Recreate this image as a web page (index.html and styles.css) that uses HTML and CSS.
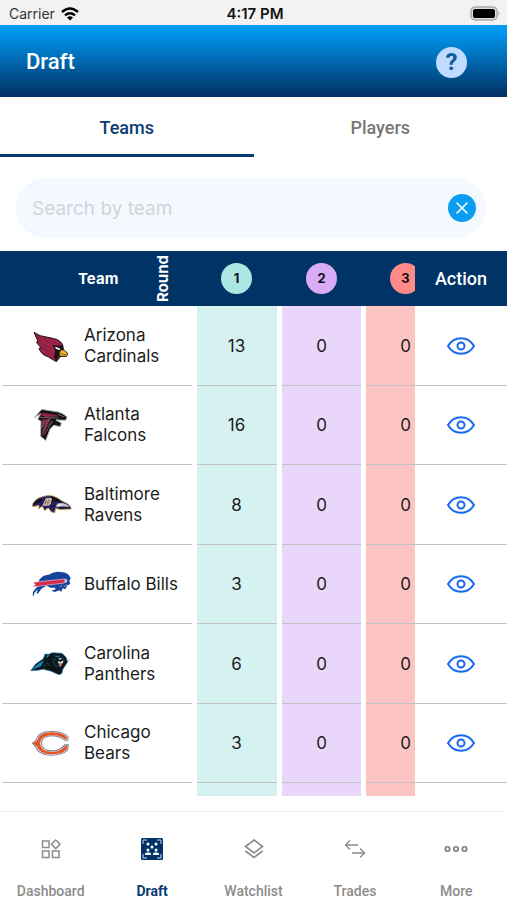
FILE: index.html
```html
<!DOCTYPE html>
<html lang="en">
<head>
<meta charset="utf-8">
<meta name="viewport" content="width=device-width, initial-scale=1">
<title>Draft</title>
<link rel="stylesheet" href="styles.css">
</head>
<body>
<svg class="defs" aria-hidden="true">
  <symbol id="eye" viewBox="0 0 30 20">
    <path d="M2 10C5 5 9.500 2.200 15 2.200S25 5 28 10C25 15 20.500 17.800 15 17.800S5 15 2 10Z"/>
    <circle cx="15" cy="10" r="3.500"/>
  </symbol>
</svg>
<div class="app">
  <div class="status">
    <span class="carrier">Carrier
      <svg width="18" height="14" viewBox="0 0 18 14" aria-hidden="true"><g fill="none" stroke="#000" stroke-width="2.400"><path d="M1 5Q9-2 17 5"/><path d="M4 8.300Q9 4 14 8.300"/></g><path d="M6 10.500Q9 8 12 10.500L9 13.600Z"/></svg>
    </span>
    <span class="time">4:17 PM</span>
    <svg class="battery" width="31" height="16" viewBox="0 0 31 16" aria-hidden="true"><rect x="1" y="1" width="26" height="13" rx="4" fill="#ddd" stroke="#aaa" stroke-width="1.500"/><rect x="3" y="3" width="22" height="9" rx="2"/><path d="M28.500 5Q31 7.500 28.500 10Z" fill="#aaa"/></svg>
  </div>
  <header class="header">
    <h1>Draft</h1>
    <button class="help" type="button" aria-label="Help">?</button>
  </header>
  <nav class="tabs">
    <a class="tab active" href="#teams">Teams</a>
    <a class="tab" href="#players">Players</a>
  </nav>
  <form class="search">
    <input type="text" placeholder="Search by team" aria-label="Search by team">
    <button type="reset" aria-label="Clear"><svg width="28" height="28" viewBox="0 0 28 28"><path d="M9 9L19 19M19 9L9 19" stroke="#fff" stroke-width="1.600" stroke-linecap="round"/></svg></button>
  </form>
  <table class="board">
    <thead>
      <tr>
        <th class="team-head" scope="col"><span>Team</span><span class="round">Round</span></th>
        <th class="pick" scope="col"><div><span class="badge one">1</span></div></th>
        <th class="pick" scope="col"><div><span class="badge two">2</span></div></th>
        <th class="pick last" scope="col"><div><span class="badge three">3</span></div></th>
        <th class="action" scope="col">Action</th>
      </tr>
    </thead>
    <tbody>
      <tr>
        <td class="team"><svg class="logo" viewBox="30 16 132 120" aria-hidden="true"><path d="M42 35L60 45L98 53Q120 57 128 72L130 87L143 98L139 107L122 107L109 123L84 108Q64 103 57 83L63 81L49 65L54 62Z" fill="#9b2346" stroke="#171216" stroke-width="3"/><path d="M56 50L86 63M57 65L84 78M66 82L88 90" stroke="#741a37" stroke-width="2"/><path d="M98 73Q116 77 127 73L131 86L119 91L117 106L109 121L101 109Q108 98 105 88Z" fill="#191416"/><path d="M105 78L119 83L120 88L108 85Z" fill="#fff"/><path d="M124 87L134 89L144 100L139 107L118 106L119 94Z" fill="#f4b52b" stroke="#171216" stroke-width="2"/><path d="M122 98L140 103" stroke="#5c4215" stroke-width="2"/></svg><span>Arizona Cardinals</span></td>
        <td class="pick c1"><div>13</div></td><td class="pick c2"><div>0</div></td><td class="pick c3 last"><div>0</div></td>
        <td class="action"><button type="button" aria-label="View Arizona Cardinals"><svg><use href="#eye"/></svg></button></td>
      </tr>
      <tr>
        <td class="team"><svg class="logo" viewBox="30 30 132 120" aria-hidden="true"><path d="M42 69L65 43L103 49Q130 52 141 67L137 76L108 75L124 84L121 95L101 91L90 103L77 137L61 123L63 79L53 73L62 56Z" fill="#151216" stroke="#b8bec3" stroke-width="3"/><path d="M67 53L104 59L119 64L80 66L60 61Z" fill="#8f2440"/><path d="M66 75L72 71L71 83L65 91ZM77 73L92 70L82 83L65 105ZM90 80L98 76L77 102L68 122L64 116L69 106Z" fill="#8f2440"/><path d="M59 67L116 69M75 74L64 100M89 72L69 108M98 79L72 119M114 58L133 66" fill="none" stroke="#b9b6ba" stroke-width="1.500"/></svg><span>Atlanta Falcons</span></td>
        <td class="pick c1"><div>16</div></td><td class="pick c2"><div>0</div></td><td class="pick c3 last"><div>0</div></td>
        <td class="action"><button type="button" aria-label="View Atlanta Falcons"><svg><use href="#eye"/></svg></button></td>
      </tr>
      <tr>
        <td class="team"><svg class="logo" viewBox="30 27 132 120" aria-hidden="true"><path d="M37 85Q47 66 67 62Q93 54 112 66L132 78Q148 83 154 99L121 101L107 97L104 111L93 107L86 97L79 99L74 105L67 91L56 98L57 88L39 93Z" fill="#282066" stroke="#cda83b" stroke-width="2.500"/><path d="M40 86Q51 70 66 69L63 78L48 83ZM92 61Q111 64 126 79L109 77Q101 73 92 76Z" fill="#111019"/><path d="M69 88L78 68L94 67Q97 73 91 77Q95 83 86 88Z" fill="#d8bf75" stroke="#fff" stroke-width="1.500"/><path d="M79 72L75 85M84 73H89M81 79H88M80 84H85" stroke="#695480" stroke-width="3"/><path d="M112 81L128 80Q146 84 151 96L132 93L105 94Z" fill="#c8c9d5" stroke="#171228" stroke-width="2"/><path d="M112 86L126 84L120 89Z" fill="#fff"/><path d="M119 94H151M61 86L71 79M91 92L105 88" stroke="#171228" stroke-width="3"/></svg><span>Baltimore Ravens</span></td>
        <td class="pick c1"><div>8</div></td><td class="pick c2"><div>0</div></td><td class="pick c3 last"><div>0</div></td>
        <td class="action"><button type="button" aria-label="View Baltimore Ravens"><svg><use href="#eye"/></svg></button></td>
      </tr>
      <tr>
        <td class="team"><svg class="logo" viewBox="30 25 132 120" aria-hidden="true"><path d="M55 78Q65 57 86 57Q104 46 122 49Q145 49 152 68L148 76L151 85L142 89L136 101L128 98L124 108L117 104L105 109L94 105L107 101L105 96L91 96L80 90L66 98L53 114L49 113L54 101L43 111L42 120L38 119L39 108L53 92Z" fill="#16449b"/><path d="M39 80L132 70L138 72L133 82L37 94L46 87Z" fill="#d82b48" stroke="#fff" stroke-width="1.500"/><path d="M134 69L142 72L138 82L134 79Z" fill="#fff"/><path d="M136 72L135 77" stroke="#16449b" stroke-width="2"/><path d="M120 94L127 89M133 94L140 86" stroke="#fff" stroke-width="1.500"/></svg><span>Buffalo Bills</span></td>
        <td class="pick c1"><div>3</div></td><td class="pick c2"><div>0</div></td><td class="pick c3 last"><div>0</div></td>
        <td class="action"><button type="button" aria-label="View Buffalo Bills"><svg><use href="#eye"/></svg></button></td>
      </tr>
      <tr>
        <td class="team"><svg class="logo" viewBox="30 24 132 120" aria-hidden="true"><path d="M32 104L47 84L70 68L75 54L86 55L97 50L126 52L138 64L143 78L137 87L129 99L125 113L117 116L91 105L70 100L52 103Z" fill="#0e1318" stroke="#1688bd" stroke-width="2"/><path d="M34 103L54 84L73 73L62 91ZM78 60L88 56L83 65ZM98 59L122 59L115 64Z" fill="#168cc2"/><path d="M69 93L82 81L91 91M97 67L106 70L99 77L105 89L114 91M126 62L133 74" fill="none" stroke="#1780b0" stroke-width="1.500"/><path d="M113 68L126 65L121 71ZM113 75L121 78L130 73L129 82L122 80L118 88Z" fill="#e9edf0"/><path d="M118 81L127 81L123 92L116 90Z" fill="#bb7b79"/><path d="M140 69L149 72M140 73L148 76" stroke="#9aa3aa" stroke-width="1.500"/></svg><span>Carolina Panthers</span></td>
        <td class="pick c1"><div>6</div></td><td class="pick c2"><div>0</div></td><td class="pick c3 last"><div>0</div></td>
        <td class="action"><button type="button" aria-label="View Carolina Panthers"><svg><use href="#eye"/></svg></button></td>
      </tr>
      <tr>
        <td class="team"><svg class="logo" viewBox="30 21 132 120" aria-hidden="true"><path d="M35 82L47 71Q54 45 91 45Q132 44 146 62L145 74H134Q119 62 97 61Q68 61 65 82Q68 103 97 103Q119 103 134 85H147L144 103Q130 119 91 119Q54 118 46 93Z" fill="#7f8795"/><path d="M38 82L49 74Q56 48 91 48Q130 47 143 63L142 71H136Q119 58 96 58Q65 59 62 82Q65 106 97 107Q119 106 136 89H143L141 101Q128 116 91 116Q56 115 49 90Z" fill="#fff"/><path d="M41 82L52 76Q59 51 91 51Q126 50 139 64V68H137Q119 55 96 55Q61 56 58 82Q61 109 97 110Q120 109 137 92H140L138 99Q126 113 91 113Q59 112 52 89Z" fill="#e65325" stroke="#e65325" stroke-width="4"/></svg><span>Chicago Bears</span></td>
        <td class="pick c1"><div>3</div></td><td class="pick c2"><div>0</div></td><td class="pick c3 last"><div>0</div></td>
        <td class="action"><button type="button" aria-label="View Chicago Bears"><svg><use href="#eye"/></svg></button></td>
      </tr>
      <tr class="tail" aria-hidden="true"><td></td><td class="pick c1"></td><td class="pick c2"></td><td class="pick c3 last"></td><td></td></tr>
    </tbody>
  </table>
  <nav class="bottom">
    <a href="#dashboard"><svg viewBox="0 0 24 24"><g stroke-width="1.500"><rect x="3.500" y="4" width="6.500" height="6.500"/><rect x="3.500" y="14" width="6.500" height="6.500"/><rect x="13.500" y="14" width="6.500" height="6.500"/><path d="M16.700 3L21 7.300L16.700 11.600L12.400 7.300Z"/></g></svg><span>Dashboard</span></a>
    <a class="active" href="#draft"><svg viewBox="0 0 24 24"><rect x="1" y="1" width="22" height="22" rx="1.500" fill="#036" stroke="none"/><path d="M3 7V3H7M17 3H21V7M21 17V21H17M7 21H3V17" stroke="#cbd8e8" stroke-width="1"/><g fill="#fff" stroke="none"><circle cx="8" cy="7" r="1.500"/><circle cx="16" cy="7" r="1.500"/><circle cx="12" cy="10" r="1.500"/><circle cx="8" cy="13" r="1.500"/><circle cx="16" cy="13" r="1.500"/><path d="M5 18V17Q5 15.500 6.500 15.500H9.500Q11 15.500 11 17V18ZM13 18V17Q13 15.500 14.500 15.500H17.500Q19 15.500 19 17V18Z"/></g></svg><span>Draft</span></a>
    <a href="#watchlist"><svg viewBox="0 0 24 24"><path d="M12 3L20.500 9.500L12 16L3.500 9.500ZM3.500 14L12 20.500L20.500 14" stroke-width="1.700"/></svg><span>Watchlist</span></a>
    <a href="#trades"><svg viewBox="0 0 24 24"><path d="M15 8H3M7 3.500L2.500 8L7 12.500M9 16H21M17 11.500L21.500 16L17 20.500" stroke-width="1.400"/></svg><span>Trades</span></a>
    <a href="#more"><svg viewBox="0 0 24 24"><g stroke="#777" stroke-width="1.600"><circle cx="3.500" cy="12" r="2.200"/><circle cx="12" cy="12" r="2.200"/><circle cx="20.500" cy="12" r="2.200"/></g></svg><span>More</span></a>
  </nav>
</div>
</body>
</html>
```
FILE: styles.css
```css
* { box-sizing: border-box; }
body { margin: 0; background: #fff; color: #1c1c1c; font-family: Inter, "Liberation Sans", sans-serif; }
button { border: 0; padding: 0; background: none; cursor: pointer; }
a { color: inherit; text-decoration: none; }
.defs { display: none; }
.app { display: flex; flex-direction: column; min-height: 100vh; }

.status { display: grid; grid-template-columns: 1fr auto 1fr; align-items: center; height: 25px; padding: 2px 6px 0 9px; background: #f2f2f2; font-size: 14px; line-height: 20px; }
.carrier { display: flex; align-items: center; gap: 6px; color: #333; }
.time { color: #111; font-size: 15px; font-weight: 600; }
.battery { justify-self: end; }

.header { display: flex; align-items: center; justify-content: space-between; height: 72px; padding: 2px 40px 0 26px; background: linear-gradient(#0099f2 8%, #003468 96%); }
.header h1 { margin: 0; color: #fff; font: 500 22px/28px Roboto, sans-serif; }
.help { width: 31px; height: 31px; border-radius: 50%; background: #bfdbff; color: #0f5b9f; font: 700 24px/31px Roboto, sans-serif; }

.tabs { display: flex; height: 60px; font: 500 18px/24px Roboto, sans-serif; }
.tab { display: flex; flex: 1; align-items: center; justify-content: center; padding-top: 4px; border-bottom: 3px solid transparent; color: #777; }
.tab.active { border-color: #0b3c73; color: #0b3c73; }

.search { display: flex; align-items: center; height: 60px; margin: 21px 21px 13px 16px; padding: 0 10px 0 16px; border-radius: 30px; background: #f3f9ff; }
.search input { flex: 1; min-width: 0; border: 0; padding: 2px 0 0; outline: 0; background: none; font: 400 19px/28px Inter, sans-serif; }
.search input::placeholder { color: #d0d5da; opacity: 1; }
.search button { width: 28px; height: 28px; border-radius: 50%; background: #0a9df2; }
.search svg { display: block; }

.board { display: grid; flex: 1; grid-template-rows: 55px 1fr; margin-bottom: 15px; }
.board thead { display: grid; background: #036; color: #fff; }
.board tbody { display: grid; grid-template-rows: repeat(6, 1fr) 13px; }
.board tr { display: grid; grid-template-columns: 1fr 85px 84px 49px 92px; }
.board th, .board td { display: flex; align-items: center; padding: 0; }
.board td { padding-top: 1px; border-bottom: 1px solid #c3c3c3; }
.board .tail td { border: 0; }
.board .team-head { gap: 35px; padding-left: 78px; font-size: 15px; line-height: 20px; }
.round { writing-mode: vertical-rl; transform: rotate(180deg); }
.pick { margin-right: 5px; overflow: hidden; font-size: 17px; line-height: 24px; }
.pick.last { margin-right: 0; }
.pick div { display: flex; flex: none; justify-content: center; width: 79px; }
.badge { width: 31px; height: 31px; border-radius: 50%; color: #111; font-size: 13px; line-height: 31px; text-align: center; }
.one { background: #ace6e3; }
.two { background: #d9acf5; }
.three { background: #ff8a8a; }
.c1 { background: #d5f2f0; }
.c2 { background: #ead6fa; }
.c3 { background: #fdc4c4; }
.action { justify-content: center; }
th.action { font: 500 18px/24px Roboto, sans-serif; }
.action svg { display: block; width: 30px; height: 20px; fill: none; stroke: #1769f5; stroke-width: 2; }
.board .team { gap: 10px; margin: 0 5px 0 2px; padding-left: 28px; font-size: 17px; line-height: 21px; }
.team span { flex: 1; max-width: 100px; }
.logo { flex: none; width: 44px; height: 40px; }

.bottom { display: flex; height: 89px; border-top: 1px solid #f1f1f1; color: #8c8c8c; font: 500 14px/18px Roboto, sans-serif; }
.bottom a { display: flex; flex: 1; flex-direction: column; align-items: center; gap: 21px; padding-top: 25px; }
.bottom svg { flex: none; width: 24px; height: 24px; fill: none; stroke: #8c8c8c; }
.bottom .active { color: #0b3c73; font-weight: 700; }
```
